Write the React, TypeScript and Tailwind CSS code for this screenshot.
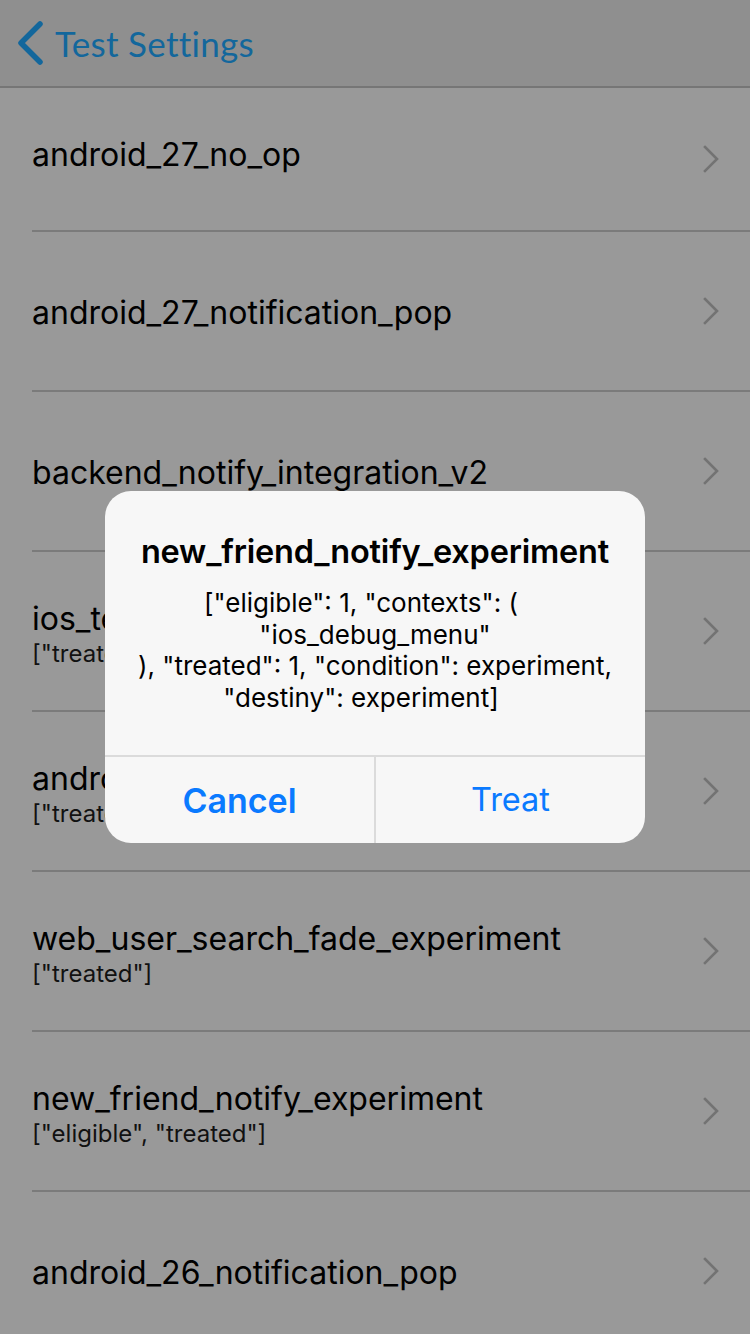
type Row = { name: string; tags?: string };

const rows: Row[] = [
  { name: "android_27_no_op" },
  { name: "android_27_notification_pop" },
  { name: "backend_notify_integration_v2" },
  { name: "ios_test_experiment", tags: '["treated"]' },
  { name: "android_test_experiment", tags: '["treated"]' },
  { name: "web_user_search_fade_experiment", tags: '["treated"]' },
  { name: "new_friend_notify_experiment", tags: '["eligible", "treated"]' },
  { name: "android_26_notification_pop" },
];

const font = { fontFamily: "Inter, 'Noto Sans', sans-serif" };

function Chevron() {
  return (
    <svg width="18" height="30" viewBox="0 0 18 30" className="shrink-0">
      <polyline
        points="3,3 15,15 3,27"
        fill="none"
        stroke="#737373"
        strokeWidth="2.6"
        strokeLinecap="square"
      />
    </svg>
  );
}

function ListRow({ row, first }: { row: Row; first: boolean }) {
  return (
    <div className={`pl-8 ${first ? "h-[144px]" : "h-[160px]"}`}>
      <div className="h-full flex items-center pr-[30px] border-b-2 border-[#7b7b7b]">
        <div className={`flex-1 ${first ? "-mt-2" : "mt-1"}`}>
          <div className="text-[32px] leading-[38px] text-black">{row.name}</div>
          {row.tags && (
            <div className="mt-[3px] text-[24px] leading-[26px] text-[#111]">{row.tags}</div>
          )}
        </div>
        <Chevron />
      </div>
    </div>
  );
}

export default function App() {
  return (
    <div className="w-[750px] h-[1334px] bg-[#999999] relative overflow-hidden" style={font}>
      <div className="h-[88px] bg-[#8f8f8f] border-b-2 border-[#767676] flex items-center pl-[16px]">
        <svg width="30" height="44" viewBox="0 0 30 44" className="mr-[9px]">
          <polyline
            points="24,3 5,22 24,41"
            fill="none"
            stroke="#13679c"
            strokeWidth="5.5"
            strokeLinecap="round"
            strokeLinejoin="round"
          />
        </svg>
        <span
          className="text-[35px] text-[#13679c] tracking-[0.3px]"
          style={{ fontFamily: "Lato, 'Open Sans', sans-serif" }}
        >
          Test Settings
        </span>
      </div>
      <div>
        {rows.map((r, i) => (
          <ListRow key={r.name} row={r} first={i === 0} />
        ))}
      </div>

      <div className="absolute inset-0 flex items-center justify-center">
        <div className="w-[540px] h-[352px] rounded-[26px] bg-[#f7f7f7] flex flex-col overflow-hidden">
          <div className="flex-1 flex flex-col items-center pt-[41px] text-black">
            <div className="text-[32.5px] leading-[40px] font-semibold tracking-[-0.2px]">
              new_friend_notify_experiment
            </div>
            <div className="mt-[15px] text-[26px] leading-[31.7px] text-center">
              <div className="pr-[28px]">["eligible": 1, "contexts": (</div>
              <div>"ios_debug_menu"</div>
              <div>), "treated": 1, "condition": experiment,</div>
              <div className="pr-[28px]">"destiny": experiment]</div>
            </div>
          </div>
          <div className="h-[88px] border-t-2 border-[#dbdbdb] flex">
            <div className="flex-1 flex items-center justify-center text-[34px] font-semibold text-[#0a7aff] border-r-2 border-[#dbdbdb]">
              Cancel
            </div>
            <div className="flex-1 flex items-center justify-center text-[32.5px] text-[#0a7aff]">
              Treat
            </div>
          </div>
        </div>
      </div>
    </div>
  );
}
